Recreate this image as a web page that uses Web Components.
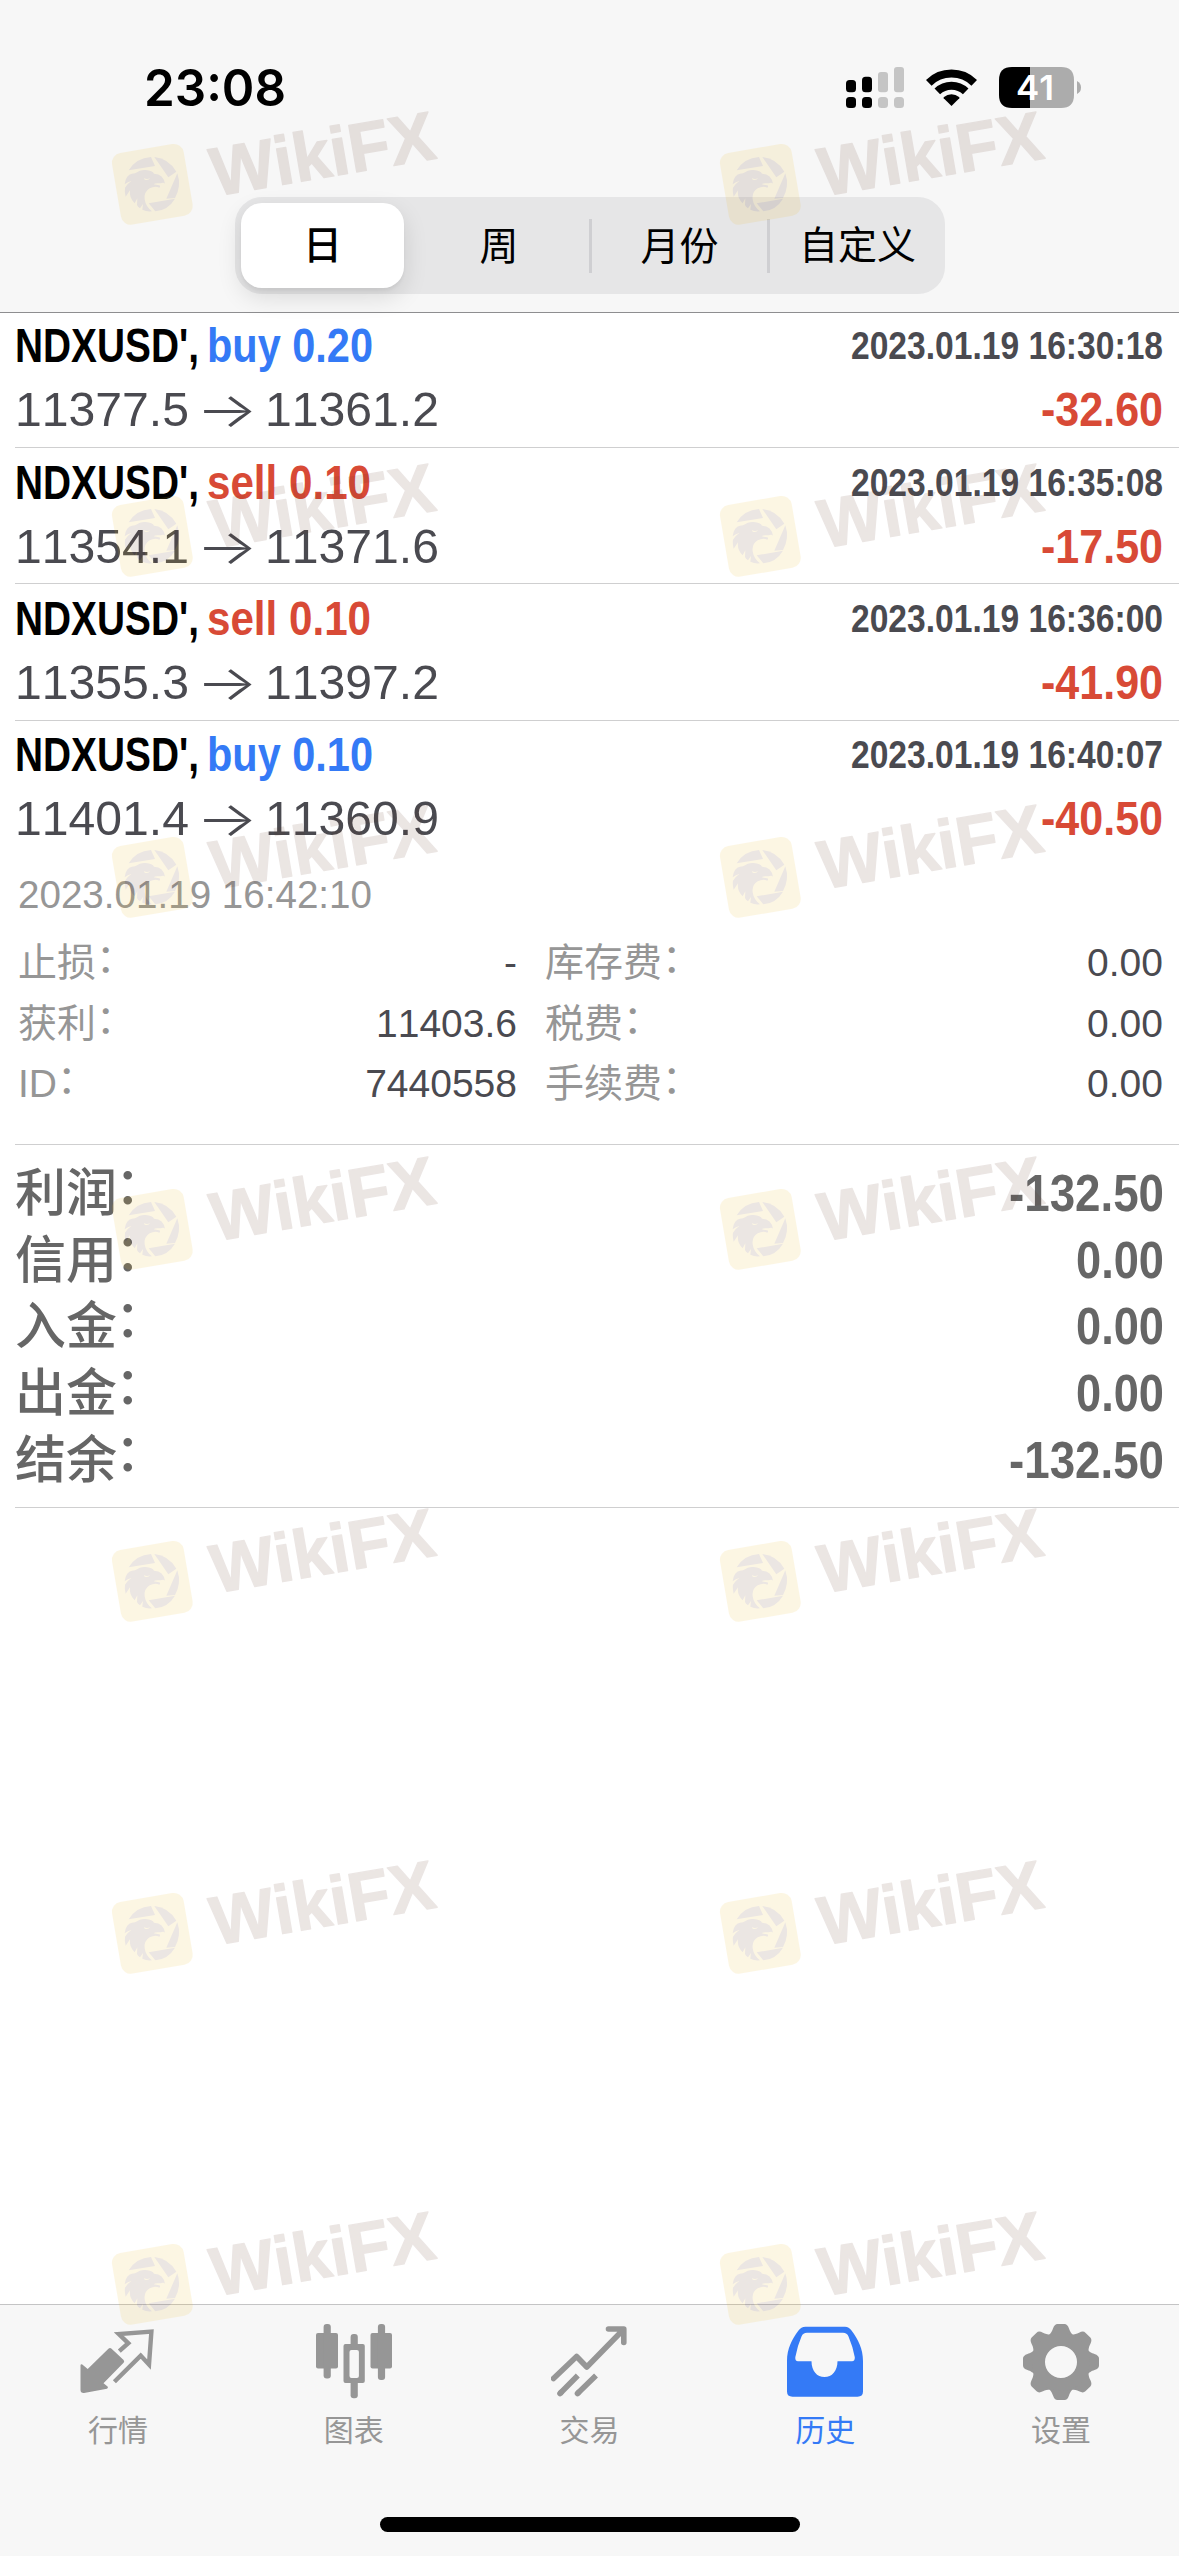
<!DOCTYPE html>
<html lang="zh-CN">
<head>
<meta charset="UTF-8">
<title>历史</title>
<style>
    html, body {
        margin: 0;
        padding: 0;
    }
    body {
        width: 1179px;
        height: 2556px;
        overflow: hidden;
        background: #fff;
        font-family: "Liberation Sans", "Noto Sans CJK SC", sans-serif;
        font-kerning: none;
    }
</style>
</head>
<body>
<history-app></history-app>

<script>
const deals = [
    { symbol: "NDXUSD'", side: 'buy', volume: '0.20', time: '2023.01.19 16:30:18', open: '11377.5', close: '11361.2', profit: '-32.60' },
    { symbol: "NDXUSD'", side: 'sell', volume: '0.10', time: '2023.01.19 16:35:08', open: '11354.1', close: '11371.6', profit: '-17.50' },
    { symbol: "NDXUSD'", side: 'sell', volume: '0.10', time: '2023.01.19 16:36:00', open: '11355.3', close: '11397.2', profit: '-41.90' },
    { symbol: "NDXUSD'", side: 'buy', volume: '0.10', time: '2023.01.19 16:40:07', open: '11401.4', close: '11360.9', profit: '-40.50', expanded: true }
];

const totals = [
    ['利润', '-132.50'],
    ['信用', '0.00'],
    ['入金', '0.00'],
    ['出金', '0.00'],
    ['结余', '-132.50']
];

const details = [
    ['止损', '-'],
    ['库存费', '0.00'],
    ['获利', '11403.6'],
    ['税费', '0.00'],
    ['ID', '7440558'],
    ['手续费', '0.00']
];

const tabIcons = {
    quotes: `
        <path fill="currentColor" d="M.5 41.5Q.6 39.6 2.3 40.4L7.7 45 28.4 24.8Q30 23.2 31.6 24.8L43.6 36Q44.8 37.4 43.6 38.8L23.5 59.3 27.6 62.6Q28.6 64 27 64.8L4 69Q.5 69.2.5 66Z"/>
        <path fill="none" stroke="currentColor" stroke-width="4.4" d="M39.3 27.2L48.3 19.2 38.8 10 71.4 7.6 69 40.5 60.7 31.6 34.4 57.8"/>`,
    chart: `
        <g fill="currentColor">
            <rect x="0" y="9" width="22" height="35.5" rx="2"/>
            <rect x="7.6" y="0" width="7.2" height="54.5" rx="3"/>
            <path fill-rule="evenodd" d="M29.5 20h17.3q2 0 2 2v35q0 2-2 2H29.5q-2 0-2-2V22q0-2 2-2zm6 6q-2 0-2 2v24q0 2 2 2h5.4q2 0 2-2V28q0-2-2-2z"/>
            <rect x="34.6" y="10" width="7.2" height="14" rx="3"/>
            <rect x="34.6" y="55" width="7.2" height="19.3" rx="3"/>
            <rect x="54.5" y="9" width="21.5" height="35.5" rx="2"/>
            <rect x="61.9" y="0" width="7.2" height="56" rx="3"/>
        </g>`,
    trade: `
        <g fill="none" stroke="currentColor" stroke-width="5.6" stroke-linejoin="round">
            <path stroke-linecap="round" d="M2.5 54.5L25.6 32.5 35.8 43 71.5 6.5M57.5 5H72.8V18.5"/>
            <path d="M9 69.5L26.8 51.5M26.5 69.5L45 51.5"/>
            <path stroke-linecap="round" d="M9 69.5l1-1M26.5 69.5l1-1"/>
        </g>`,
    history: `
        <path fill="currentColor" fill-rule="evenodd" d="M18.5 2.7H58Q62 2.7 64.5 6.5C71 15 76 25 76 37V67.500Q76 72.7 70.5 72.7H5.5Q0 72.7 0 67.5V37C0 25 5 15 11.5 6.5Q14 2.7 18.5 2.7ZM20 8.8Q16 8.8 14.5 12.5Q10.500 21.5 8.3 33.3Q8 37.2 11 37.2H24.5C24.5 47 30 53 37.5 53S50.5 47 50.5 37.2H65Q68 37.2 67.8 33.3Q66 23 61.5 12.5Q60 8.8 56 8.8Z"/>`,
    settings: (() => {
        const tooth = 'M-14-25C-10-28.5-9-30.5-8-33.5Q-6.5-38-3.5-38H3.5Q6.5-38 8-33.5C9-30.5 10-28.5 14-25Z';
        let teeth = '';
        for (let a = 0; a < 360; a += 45) {
            teeth += `<path d="${tooth}" transform="rotate(${a})"/>`;
        }
        return `
        <g fill="currentColor" transform="translate(38 38)">
            ${teeth}
            <circle r="22.5" fill="none" stroke="currentColor" stroke-width="13"/>
        </g>`;
    })()
};

// Squeezes or widens its text to a fixed width, like a condensed face
class FitText extends HTMLElement {
    constructor() {
        super();
        this.attachShadow({ mode: 'open' });
    }

    connectedCallback() {
        this.shadowRoot.innerHTML = `
            <style>
                :host {
                    display: inline-block;
                    white-space: nowrap;
                }
                span {
                    display: inline-block;
                    transform-origin: 0 50%;
                }
            </style>
            <span><slot></slot></span>
        `;
        const span = this.shadowRoot.querySelector('span');
        const width = Number(this.getAttribute('width'));
        const natural = span.getBoundingClientRect().width;
        this.style.width = `${width}px`;
        span.style.transform = `scaleX(${width / natural})`;
    }
}

class StatusBar extends HTMLElement {
    constructor() {
        super();
        this.attachShadow({ mode: 'open' });
        this.shadowRoot.innerHTML = `
            <style>
                :host {
                    display: flex;
                    align-items: center;
                    justify-content: space-between;
                    height: 175px;
                    padding: 0 98px 0 144px;
                    box-sizing: border-box;
                }
                .time {
                    font: 600 51px/60px Inter, sans-serif;
                    color: #000;
                }
                .icons {
                    display: flex;
                    gap: 22px;
                }
                svg {
                    display: block;
                }
            </style>
            <fit-text class="time" width="142">23:08</fit-text>
            <div class="icons">
                <svg width="58" height="41" viewBox="0 0 58 41">
                    <g fill="#000">
                        <rect x="0" y="13" width="10" height="12.3" rx="3.5"/>
                        <rect x="16" y="9.8" width="10" height="15.5" rx="3.5"/>
                        <rect x="0" y="30" width="10" height="11" rx="3.5"/>
                        <rect x="16" y="30" width="10" height="11" rx="3.5"/>
                    </g>
                    <g fill="#c5c5c5">
                        <rect x="32" y="5" width="10" height="20.3" rx="3"/>
                        <rect x="48" y="0" width="10" height="25.3" rx="3"/>
                        <rect x="32" y="30" width="10" height="11" rx="3.5"/>
                        <rect x="48" y="30" width="10" height="11" rx="3.5"/>
                    </g>
                </svg>
                <svg width="51" height="41" viewBox="0 0 51 41">
                    <g fill="none" stroke="#000" stroke-width="8">
                        <path d="M2.8 15.8A32.5 32.5 0 0 1 48.2 15.8"/>
                        <path d="M11.3 24.4A20.5 20.5 0 0 1 39.7 24.4"/>
                    </g>
                    <path d="M25.5 39L17.7 31.2Q17.3 30.6 18 30A12 12 0 0 1 33 30Q33.7 30.6 33.3 31.2Z"/>
                </svg>
                <svg width="82" height="41" viewBox="0 0 82 41">
                    <path fill="#acacac" d="M31 0H62Q75 0 75 13V28Q75 41 62 41H31Z"/>
                    <path d="M31 0H13Q0 0 0 13V28Q0 41 13 41H31Z"/>
                    <path fill="#acacac" d="M78 14Q82 16 82 20.5T78 27Z"/>
                    <text x="36" y="33" text-anchor="middle" font-family="Inter" font-weight="600" font-size="34" textLength="38" lengthAdjust="spacingAndGlyphs" fill="#fff">41</text>
                </svg>
            </div>
        `;
    }
}

class PeriodPicker extends HTMLElement {
    constructor() {
        super();
        this.attachShadow({ mode: 'open' });
        this.shadowRoot.innerHTML = `
            <style>
                :host {
                    display: grid;
                    grid-template-columns: 169px 188px 178px 175px;
                    align-items: center;
                    width: 710px;
                    height: 97px;
                    margin: 22px auto 0 235px;
                    border-radius: 27px;
                    background: #e6e6e7;
                    color: #000;
                    font-size: 39px;
                    line-height: 55px;
                    text-align: center;
                }
                .active {
                    margin-left: 6px;
                    width: 163px;
                    height: 85px;
                    line-height: 86px;
                    border-radius: 21px;
                    background: #fff;
                    box-shadow: 0 9px 24px rgba(0, 0, 0, .12), 0 3px 3px rgba(0, 0, 0, .04);
                    font-weight: 500;
                }
                .line {
                    height: 54px;
                    border-right: 3px solid #cfcfd2;
                }
                .week {
                    padding-left: 5px;
                }
            </style>
            <div class="active">日</div>
            <div class="line week">周</div>
            <div class="line">月份</div>
            <div>自定义</div>
        `;
    }
}

class DealRow extends HTMLElement {
    constructor() {
        super();
        this.attachShadow({ mode: 'open' });
    }

    set deal(d) {
        this.shadowRoot.innerHTML = `
            <style>
                :host {
                    display: block;
                    box-sizing: border-box;
                    height: 136.33px;
                    margin-left: 15px;
                    padding: 2.7px 16px 0 0;
                    border-bottom: 1.5px solid #cfcfd0;
                    font-size: 48px;
                    line-height: 64px;
                    color: #4a4a50;
                }
                :host([expanded]) {
                    height: 424.33px;
                }
                .row {
                    display: flex;
                    justify-content: space-between;
                    align-items: center;
                    height: 64px;
                }
                .row > div {
                    display: flex;
                }
                b {
                    color: #000;
                    margin-right: 8px;
                }
                .buy {
                    color: #347af6;
                }
                .sell, .profit {
                    color: #d84a36;
                }
                .buy, .sell, .time, .profit {
                    font-weight: bold;
                }
                .time {
                    font-size: 39px;
                }
                .arrow {
                    margin: 0 7px;
                    font-family: Inter, sans-serif;
                    font-weight: 300;
                }
            </style>
            <div class="row">
                <div><b><fit-text width="184">${d.symbol},</fit-text></b><fit-text class="${d.side}" width="${d.side === 'buy' ? 166 : 164}">${d.side} ${d.volume}</fit-text></div>
                <fit-text class="time" width="312">${d.time}</fit-text>
            </div>
            <div class="row">
                <div><fit-text width="174">${d.open}</fit-text><fit-text class="arrow" width="62">→</fit-text><fit-text width="174">${d.close}</fit-text></div>
                <fit-text class="profit" width="122">${d.profit}</fit-text>
            </div>
            <slot></slot>
        `;
    }
}

class DealDetails extends HTMLElement {
    constructor() {
        super();
        this.attachShadow({ mode: 'open' });
        this.shadowRoot.innerHTML = `
            <style>
                :host {
                    display: block;
                    padding: 14px 0 0 3px;
                    font-size: 39px;
                    line-height: 60.5px;
                    color: #969696;
                }
                .date {
                    height: 68px;
                }
                .grid {
                    display: grid;
                    grid-template-columns: 499px 618px;
                    column-gap: 28px;
                }
                .grid div {
                    display: flex;
                    justify-content: space-between;
                    height: 60.5px;
                }
                .colon {
                    line-height: 0;
                    vertical-align: 4px;
                }
                i {
                    font-style: normal;
                    color: #4a4a50;
                }
            </style>
            <div class="date"><fit-text width="354">2023.01.19 16:42:10</fit-text></div>
            <div class="grid">
                ${details.map(([label, value]) => `
                    <div><span>${label}<span class="colon">：</span></span><i>${value}</i></div>
                `).join('')}
            </div>
        `;
    }
}

class DealTotals extends HTMLElement {
    constructor() {
        super();
        this.attachShadow({ mode: 'open' });
        this.shadowRoot.innerHTML = `
            <style>
                :host {
                    display: block;
                    margin-left: 15px;
                    padding: 16px 15px 13px 0;
                    border-bottom: 1.5px solid #cfcfd0;
                    font-size: 51px;
                    line-height: 66.67px;
                    font-weight: bold;
                    color: #666;
                }
                .row {
                    display: flex;
                    justify-content: space-between;
                    height: 66.67px;
                }
                .label {
                    font-weight: 500;
                }
                .colon {
                    margin-left: -2px;
                    line-height: 0;
                    vertical-align: 7px;
                }
            </style>
            ${totals.map(([label, value]) => `
                <div class="row">
                    <span class="label">${label}<span class="colon">：</span></span>
                    <fit-text width="${value === '0.00' ? 88 : 155}">${value}</fit-text>
                </div>
            `).join('')}
        `;
    }
}

class TabItem extends HTMLElement {
    constructor() {
        super();
        this.attachShadow({ mode: 'open' });
    }

    connectedCallback() {
        this.shadowRoot.innerHTML = `
            <style>
                :host {
                    display: flex;
                    flex-direction: column;
                    align-items: center;
                    flex: 1;
                    padding-top: 19px;
                    color: #969696;
                    font-size: 30px;
                    line-height: 44px;
                }
                :host([active]) {
                    color: #347af6;
                }
                svg {
                    display: block;
                    margin-bottom: 9px;
                }
            </style>
            <svg width="76" height="76" viewBox="0 0 76 76">${tabIcons[this.getAttribute('icon')]}</svg>
            <slot></slot>
        `;
    }
}

class TabBar extends HTMLElement {
    constructor() {
        super();
        this.attachShadow({ mode: 'open' });
        this.shadowRoot.innerHTML = `
            <style>
                :host {
                    display: flex;
                    flex-direction: column;
                    box-sizing: border-box;
                    height: 252px;
                    border-top: 1px solid #c4c4c5;
                    background: #f7f7f7;
                }
                .tabs {
                    display: flex;
                    height: 212px;
                }
                .home {
                    width: 420px;
                    height: 15px;
                    margin: 0 auto;
                    border-radius: 8px;
                    background: #000;
                }
            </style>
            <div class="tabs"><slot></slot></div>
            <div class="home"></div>
        `;
    }
}

class WikiMark extends HTMLElement {
    constructor() {
        super();
        this.attachShadow({ mode: 'open' });
        this.shadowRoot.innerHTML = `
            <style>
                :host {
                    display: block;
                    position: absolute;
                    width: 380px;
                    height: 140px;
                    opacity: .12;
                }
                svg {
                    display: block;
                    overflow: visible;
                }
            </style>
            <svg width="380" height="140" viewBox="0 0 1140 420">
                <rect x="-109" y="-109" width="218" height="218" rx="30" fill="#eebb22" transform="translate(187 244) rotate(-9.7)"/>
                <g fill="#613726" transform="translate(45 105)">
                    <path d="M71 97Q93 60 138 57L150 84Z"/>
                    <path d="M148 57Q192 62 214 101L190 118Z"/>
                    <path d="M217 106Q230 144 210 180L184 182Z"/>
                    <path d="M131 196L210 182Q190 216 151 220Z"/>
                    <!-- eagle head, open beak and neck feathers -->
                    <path d="M62 125Q70 106 90 106Q108 94 122 96Q143 98 147 107Q176 108 180 138Q178 132 166 136Q150 134 146 139L162 142Q168 143 163 149Q150 143 134 151Q116 162 119 184Q122 206 141 220Q126 222 112 215L114 198 105 211Q98 207 96 201L97 181 89 196Q72 180 75 157L62 176Q58 160 60 149Q66 138 79 129Q68 131 59 139Z"/>
                </g>
                <path fill="#eebb22" d="M162 225Q171 231 180 225Q176 234 164 230Z"/>
                <text x="375" y="280" transform="rotate(-9.7 375 280)" font-family="Liberation Sans" font-weight="bold" font-size="206" textLength="678" lengthAdjust="spacingAndGlyphs" fill="#613726" stroke="#613726" stroke-width="4" stroke-linejoin="round">WikiFX</text>
            </svg>
        `;
    }
}

class HistoryApp extends HTMLElement {
    constructor() {
        super();
        this.attachShadow({ mode: 'open' });
        this.shadowRoot.innerHTML = `
            <style>
                :host {
                    display: flex;
                    flex-direction: column;
                    position: relative;
                    width: 1179px;
                    height: 2556px;
                    overflow: hidden;
                }
                header {
                    position: relative;
                    z-index: 1;
                    box-sizing: border-box;
                    height: 313px;
                    background: #f7f7f7;
                    border-bottom: 1px solid #8e8e90;
                }
                main {
                    flex: 1;
                    margin-top: -1.33px;
                }
                .marks {
                    position: absolute;
                    inset: 0;
                    z-index: 2;
                    pointer-events: none;
                }
            </style>
            <header>
                <status-bar></status-bar>
                <period-picker></period-picker>
            </header>
            <main>
                <div class="deals"></div>
                <deal-totals></deal-totals>
            </main>
            <tab-bar>
                <tab-item icon="quotes">行情</tab-item>
                <tab-item icon="chart">图表</tab-item>
                <tab-item icon="trade">交易</tab-item>
                <tab-item icon="history" active>历史</tab-item>
                <tab-item icon="settings">设置</tab-item>
            </tab-bar>
            <div class="marks"></div>
        `;
    }

    connectedCallback() {
        const list = this.shadowRoot.querySelector('.deals');
        deals.forEach(deal => {
            const row = document.createElement('deal-row');
            list.appendChild(row);
            row.deal = deal;
            if (deal.expanded) {
                row.setAttribute('expanded', '');
                row.appendChild(document.createElement('deal-details'));
            }
        });

        const marks = this.shadowRoot.querySelector('.marks');
        [103, 455, 796, 1148, 1500, 1852, 2203].forEach(top => {
            [90, 698].forEach(left => {
                const mark = document.createElement('wiki-mark');
                mark.style.top = `${top}px`;
                mark.style.left = `${left}px`;
                marks.appendChild(mark);
            });
        });
    }
}

customElements.define('fit-text', FitText);
customElements.define('status-bar', StatusBar);
customElements.define('period-picker', PeriodPicker);
customElements.define('deal-row', DealRow);
customElements.define('deal-details', DealDetails);
customElements.define('deal-totals', DealTotals);
customElements.define('tab-item', TabItem);
customElements.define('tab-bar', TabBar);
customElements.define('wiki-mark', WikiMark);
customElements.define('history-app', HistoryApp);
</script>
</body>
</html>
